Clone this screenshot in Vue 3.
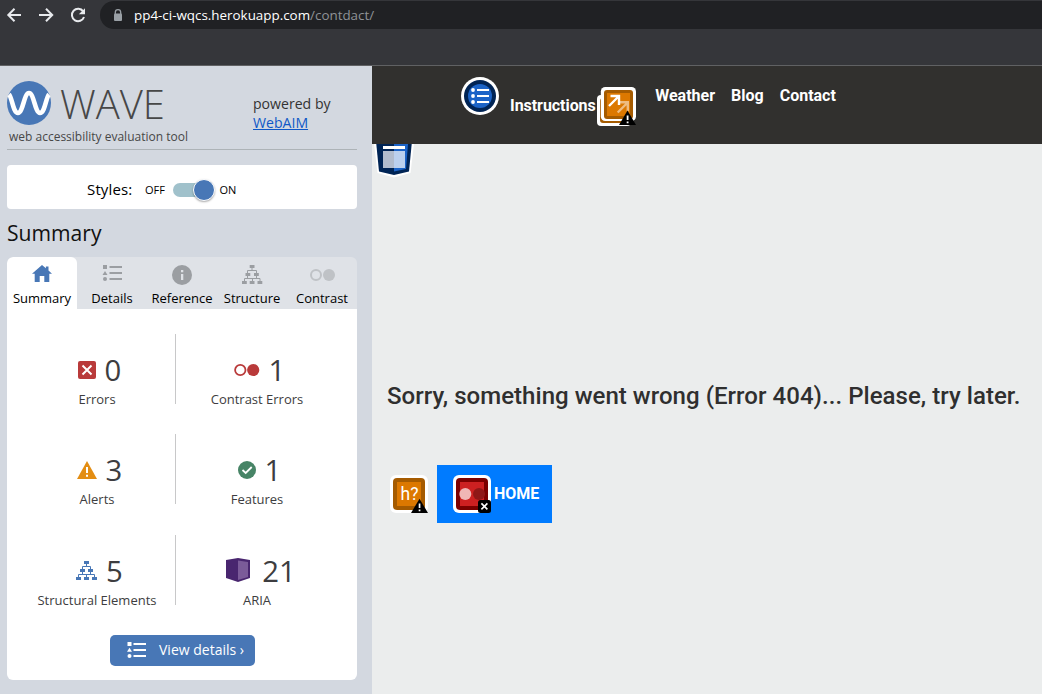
<script setup>
const tabs = [
  { id: 'summary', label: 'Summary' },
  { id: 'details', label: 'Details' },
  { id: 'reference', label: 'Reference' },
  { id: 'structure', label: 'Structure' },
  { id: 'contrast', label: 'Contrast' },
]
const stats = [
  { id: 'error', n: '0', label: 'Errors', w: 18 },
  { id: 'contrast', n: '1', label: 'Contrast Errors', w: 26 },
  { id: 'alert', n: '3', label: 'Alerts', w: 20 },
  { id: 'feature', n: '1', label: 'Features', w: 18 },
  { id: 'structure', n: '5', label: 'Structural Elements', w: 21 },
  { id: 'aria', n: '21', label: 'ARIA', w: 24 },
]
</script>

<template>
  <div class="window">
    <header class="chrome">
      <div class="toolbar">
        <svg class="nav-icons" width="100" height="30" viewBox="0 0 100 30" fill="none" stroke="#e8eaed" stroke-width="2">
          <path d="M21 15H8.5M14.5 8.8L8.3 15l6.2 6.2" />
          <path d="M39 15h13M46 8.8l6.2 6.2-6.2 6.2" />
          <path d="M83.2 11.4A6.2 6.2 0 1 0 84 17" />
          <path d="M85 8.2v6h-6.2z" fill="#e8eaed" stroke="none" />
        </svg>
        <div class="omnibox">
          <svg width="10" height="13" viewBox="0 0 10 13">
            <path d="M2.3 5V3.4a2.7 2.7 0 0 1 5.4 0V5" fill="none" stroke="#9aa0a6" stroke-width="1.3" />
            <rect x="1" y="4.6" width="8" height="7.4" rx="1" fill="#9aa0a6" />
          </svg>
          <span class="url">pp4-ci-wqcs.herokuapp.com<span class="path">/contdact/</span></span>
        </div>
      </div>
    </header>

    <div class="body">
      <aside class="sidebar">
        <div class="brand">
          <div class="logo">
            <div class="logo-row">
              <svg width="44" height="44" viewBox="0 0 44 44">
                <circle cx="22" cy="22" r="22" fill="#4877b6" />
                <path d="M2 13.5C5 16 6 32 11 32S17 12 22 12S28 32 33 32S39 16 42 13.500" fill="none" stroke="#fff" stroke-width="4.600" />
              </svg>
              <span class="wordmark">WAVE</span>
            </div>
            <div class="tagline">web accessibility evaluation tool</div>
          </div>
          <div class="powered">powered by<br><a>WebAIM</a></div>
        </div>

        <div class="styles">
          <span class="styles-label">Styles:</span>
          <span class="off">OFF</span>
          <span class="toggle"><span class="knob"></span></span>
          <span class="on">ON</span>
        </div>

        <h2>Summary</h2>

        <nav class="tabs">
          <div v-for="t in tabs" :key="t.id" class="tab" :class="{ active: t.id === 'summary' }">
            <svg width="30" height="22" viewBox="0 0 30 22">
              <path v-if="t.id === 'summary'" d="M15 2L5 10.700h2.700V19h5v-6h4.600v6h5v-8.300H25L21.500 7.500V3.500h-2.600v1.800z" fill="#4877b6" />
              <g v-if="t.id === 'details'" fill="#9b9ea2">
                <path d="M6 2h4v4H6zM8 8l2.500 4h-5zM12.500 3H25v2H12.500zM12.500 9H25v2H12.500zM12.500 15H25v2H12.500z" />
                <circle cx="8" cy="16" r="2" />
              </g>
              <g v-if="t.id === 'reference'">
                <circle cx="15" cy="12" r="10" fill="#9b9ea2" />
                <path d="M14 7h2.300v2.300H14zM14 11h2.300v6H14z" fill="#dfe2e7" />
              </g>
              <g v-if="t.id === 'structure'" fill="#9b9ea2">
                <path d="M12.700 2h4.800v3h-4.800zM8.500 10h4.800v3H8.500zM17 10h4.800v3H17zM5 18h4.800v3H5zM12.700 18h4.800v3h-4.800zM20.500 18h4.800v3h-4.800z" />
                <path d="M15 4.500v3M10.500 10.500v-3h9v3M10.500 12.500v3M19.500 12.500v3M7.500 18.500v-3h15.500v3M15.500 15.500v3" fill="none" stroke="#9b9ea2" />
              </g>
              <g v-if="t.id === 'contrast'" fill="#bfc2c6">
                <circle cx="9" cy="12" r="5" fill="none" stroke="#bfc2c6" stroke-width="2" />
                <circle cx="22" cy="12" r="6" />
              </g>
            </svg>
            <span>{{ t.label }}</span>
          </div>
        </nav>

        <section class="panel">
          <div class="grid">
            <div v-for="s in stats" :key="s.id" class="stat" :class="s.id">
              <div class="count">
                <svg :width="s.w" height="24" :viewBox="`0 0 ${s.w} 24`">
                  <g v-if="s.id === 'error'">
                    <rect y="3" width="18" height="18" rx="2" fill="#b93a3a" />
                    <path d="M4.500 7.500l9 9M13.500 7.500l-9 9" stroke="#fff" stroke-width="2" />
                  </g>
                  <g v-if="s.id === 'contrast'">
                    <circle cx="6.300" cy="12" r="5.200" fill="none" stroke="#b93a3a" stroke-width="1.800" />
                    <circle cx="19.200" cy="12" r="6.100" fill="#b93a3a" />
                  </g>
                  <g v-if="s.id === 'alert'">
                    <path d="M10 3L20 21H0z" fill="#e38d13" />
                    <path d="M9 9h2v6H9zM9 16.800h2v2H9z" fill="#fff" />
                  </g>
                  <g v-if="s.id === 'feature'">
                    <circle cx="9" cy="12" r="9" fill="#478466" />
                    <path d="M4.500 12l3.200 3 6-6" fill="none" stroke="#fff" stroke-width="1.800" />
                  </g>
                  <g v-if="s.id === 'structure'" fill="#4877b6">
                    <path d="M8 3h5v3H8zM4 11h5v3H4zM12 11h5v3h-5zM0 19h5v3H0zM8 19h5v3H8zM16 19h5v3h-5z" />
                    <path d="M10.500 5v3M6.500 11.500v-3h8v3M6.500 13.500v3M14.500 13.500v3M2.500 19.500v-3h16v3M10.500 16.500v3" fill="none" stroke="#4877b6" />
                  </g>
                  <g v-if="s.id === 'aria'">
                    <path d="M0 2L12 0l12 2V20l-12 4-12-4z" fill="#49266f" />
                    <path d="M12 2.500l10 1.500v15l-10 3z" fill="#7b5b99" />
                  </g>
                </svg>
                <span>{{ s.n }}</span>
              </div>
              <div class="label">{{ s.label }}</div>
            </div>
          </div>
          <button>
            <svg width="20" height="18" viewBox="0 0 20 18" fill="#fff">
              <path d="M.5 1h4v4h-4zM2.500 6.700l2.500 4H0zM6.500 2H19v2H6.500zM6.500 8H19v2H6.500zM6.500 14H19v2H6.500z" />
              <circle cx="2.500" cy="15" r="2" />
            </svg>
            <span>View details ›</span>
          </button>
        </section>
      </aside>

      <main class="page">
        <div class="site-nav">
          <svg class="list-badge" width="38" height="38" viewBox="0 0 38 38">
            <circle cx="19" cy="19" r="19" fill="#fff" />
            <circle cx="19" cy="19" r="16" fill="#002455" />
            <circle cx="19" cy="19" r="12" fill="#1b63c7" />
            <g fill="#fff">
              <circle cx="12" cy="13" r="1.900" /><circle cx="12" cy="19" r="1.900" /><circle cx="12" cy="25" r="1.900" />
              <path d="M16 12h12v2H16zM16 18h12v2H16zM16 24h12v2H16z" />
            </g>
          </svg>
          <span class="instructions">Instructions</span>
          <svg class="link-badge" width="39" height="39" viewBox="0 0 39 39">
            <rect y="8" width="34" height="31" rx="4" fill="#fff" />
            <rect x="3" y="11" width="29" height="25" rx="3" fill="#a55b00" />
            <rect x="3.800" width="35.200" height="34" rx="4.500" fill="#fff" />
            <rect x="7" y="3" width="29" height="29" rx="3" fill="#a55b00" />
            <rect x="10" y="6" width="23" height="23" fill="#dc7800" />
            <g fill="none" stroke="#fff" stroke-width="2.400">
              <path d="M12 19L22 9M13.500 9H22v9" />
              <path d="M20.700 25.500l10-10M22.300 15.300h8.500v9" opacity=".5" />
            </g>
            <path d="M30.500 23.500L39 38H22z" fill="#000" />
            <path d="M29.700 28.500h1.800v4.500h-1.800zM29.700 34.500h1.800v1.700h-1.800z" fill="#fff" />
          </svg>
          <span class="weather">Weather</span>
          <span>Blog</span>
          <span>Contact</span>
        </div>
        <svg class="shield" width="40" height="34" viewBox="0 0 40 34">
          <path d="M0 0h40l-3.500 29L20 33.500 3.500 29z" fill="#fff" />
          <path d="M2.300 0h35.400L35 27.500l-15 3.500-15-3.500z" fill="#002455" />
          <path d="M20 0h14l-2 25-12 2.500z" fill="#1b63c7" />
          <path d="M9 2h22v3H9z" fill="#fff" />
          <path d="M9 7h11v17H9z" fill="#b2bccd" />
          <path d="M20 7h11v17H20z" fill="#bbd0ee" />
        </svg>
        <h1>Sorry, something went wrong (Error 404)... Please, try later.</h1>
        <div class="actions">
          <svg width="38" height="38" viewBox="0 0 38 38">
            <rect width="38" height="38" rx="6" fill="#fff" />
            <rect x="3" y="3" width="32" height="32" rx="4" fill="#a55b00" />
            <rect x="7" y="7" width="24" height="24" fill="#dc7800" />
            <text x="10.500" y="25" class="h-text">h?</text>
            <path d="M29.500 23.700L38 38H21z" fill="#000" />
            <path d="M28.700 28.500h1.700v4.500h-1.700zM28.700 34.500h1.700v1.700h-1.700z" fill="#fff" />
          </svg>
          <div class="home">
            <svg width="38" height="38" viewBox="0 0 38 38">
              <rect width="38" height="38" rx="6" fill="#fff" />
              <rect x="3" y="3" width="32" height="32" rx="4" fill="#7b0000" />
              <rect x="7" y="7" width="24" height="24" fill="#cd2021" />
              <circle cx="12.300" cy="19" r="6" fill="#f0b6b6" />
              <circle cx="26" cy="19" r="6" fill="#8f1717" />
              <rect x="25" y="25" width="13" height="13" rx="2.500" fill="#000" />
              <path d="M28.400 28.400l6 6M34.400 28.400l-6 6" stroke="#fff" stroke-width="1.600" />
            </svg>
            <span>HOME</span>
          </div>
        </div>
      </main>
    </div>
  </div>
</template>

<style>
body { margin: 0; overflow: hidden; }
</style>

<style scoped>
* { box-sizing: border-box; }
svg { display: block; flex: none; overflow: visible; }
.window { width: 1042px; height: 694px; display: flex; flex-direction: column; overflow: hidden; font-family: "Open Sans", sans-serif; white-space: nowrap; }
.chrome { height: 66px; background: #35363a; border-bottom: 1px solid #606163; flex: none; }
.toolbar { display: flex; height: 30px; }
.omnibox { flex: 1; height: 28px; margin-top: 1px; border-radius: 14px 0 0 14px; background: #202124; display: flex; align-items: center; padding-left: 13px; }
.url { margin-left: 11px; font-size: 13.4px; line-height: 28px; color: #fff; }
.path { color: #8f9296; }
.body { display: flex; flex: 1; min-height: 0; }
.sidebar { width: 372px; background: #d3d8e0; padding: 15px 15px 0 7px; flex: none; }
.brand { height: 69px; border-bottom: 1px solid #adb3b7; display: flex; }
.logo { width: 246px; }
.logo-row { display: flex; height: 44px; }
.wordmark { font-size: 40px; font-weight: 300; line-height: 46px; margin-left: 9px; color: #474747; }
.tagline { font-size: 12px; line-height: 18px; margin: 3px 0 0 2px; color: #474747; }
.powered { font-size: 14.1px; line-height: 19px; padding-top: 13px; color: #333; }
.powered a { color: #0f58c7; text-decoration: underline; }
.styles { margin-top: 15px; height: 44px; border-radius: 4px; background: #fff; display: flex; align-items: center; padding: 5px 0 0 80px; font-size: 11px; color: #000; }
.styles-label { font-size: 15px; width: 58px; margin-top: -2px; letter-spacing: .15px; }
.off { width: 28px; }
.toggle { width: 40px; height: 14px; border-radius: 7px; background: #a0c1cb; position: relative; }
.knob { position: absolute; right: -2px; top: -4px; width: 22px; height: 22px; border-radius: 50%; background: #4877b6; border: 1px solid #fff; box-shadow: 0 1px 2px #0005; }
.on { margin-left: 6.5px; }
h2 { margin: 9px 0 0; height: 39px; line-height: 30px; font-size: 21.1px; font-weight: 400; color: #111; }
.tabs { display: flex; height: 52px; background: #dfe2e7; border-radius: 6px 6px 0 0; overflow: hidden; }
.tab { width: 70px; display: flex; flex-direction: column; align-items: center; padding-top: 6px; font-size: 13px; line-height: 18px; color: #000; }
.tab span { margin-top: 4px; }
.tab.active { background: #fff; border-radius: 6px 6px 0 0; }
.panel { height: 371px; background: #fff; border-radius: 0 0 6px 6px; display: flex; flex-direction: column; align-items: center; }
.grid { display: grid; grid-template-columns: 160px 160px; grid-template-rows: 70px 71px 70px; row-gap: 30px; width: 330px; padding-top: 25px; }
.stat { height: 70px; padding-top: 18px; color: #3d3d40; }
.stat:nth-child(odd) { border-right: 1px solid #c8c8c9; width: 159px; padding-left: 2px; }
.count { display: flex; align-items: center; justify-content: center; height: 36px; font-size: 29.3px; line-height: 34px; gap: 9px; padding-left: 5px; }
.aria .count { gap: 12px; padding-left: 8px; }
.structure .count svg, .aria .count svg { margin-top: -2px; }
.label { font-size: 13px; line-height: 18px; margin-top: 2px; text-align: center; }
button { margin-top: 30px; width: 145px; height: 31px; border: 0; border-radius: 5px; background: #4877b6; color: #fff; font: 14px "Open Sans", sans-serif; display: flex; align-items: center; padding: 0 0 0 17px; gap: 12.5px; }
button svg { margin-top: -1px; }
button span { margin-top: -2px; }
.page { flex: 1; background: #ebeded; font-family: Roboto, sans-serif; }
.site-nav { height: 78px; background: #31302e; display: flex; padding-left: 89px; color: #fff; font-size: 16px; font-weight: 700; line-height: 20px; gap: 16px; }
.site-nav span { margin-top: 20px; }
.list-badge { margin-top: 11px; margin-right: -5px; }
.site-nav .instructions { margin-top: 30px; width: 86px; letter-spacing: -.05px; }
.link-badge { margin: 21px 3.2px 0 -15px; }
.shield { margin-left: 2px; }
h1 { margin: 203px 0 0 15px; font-size: 24px; font-weight: 500; line-height: 30px; color: #2f2f2f; letter-spacing: .04px; }
.actions { margin: 54px 0 0 18px; display: flex; align-items: center; height: 58px; gap: 9px; }
.h-text { font-size: 17.5px; font-weight: 400; fill: #fff; }
.home { width: 115px; height: 58px; background: #007bff; display: flex; align-items: center; padding-left: 16px; gap: 3px; color: #fff; font-size: 16px; font-weight: 700; }
.home span { margin-top: -2px; }
</style>
